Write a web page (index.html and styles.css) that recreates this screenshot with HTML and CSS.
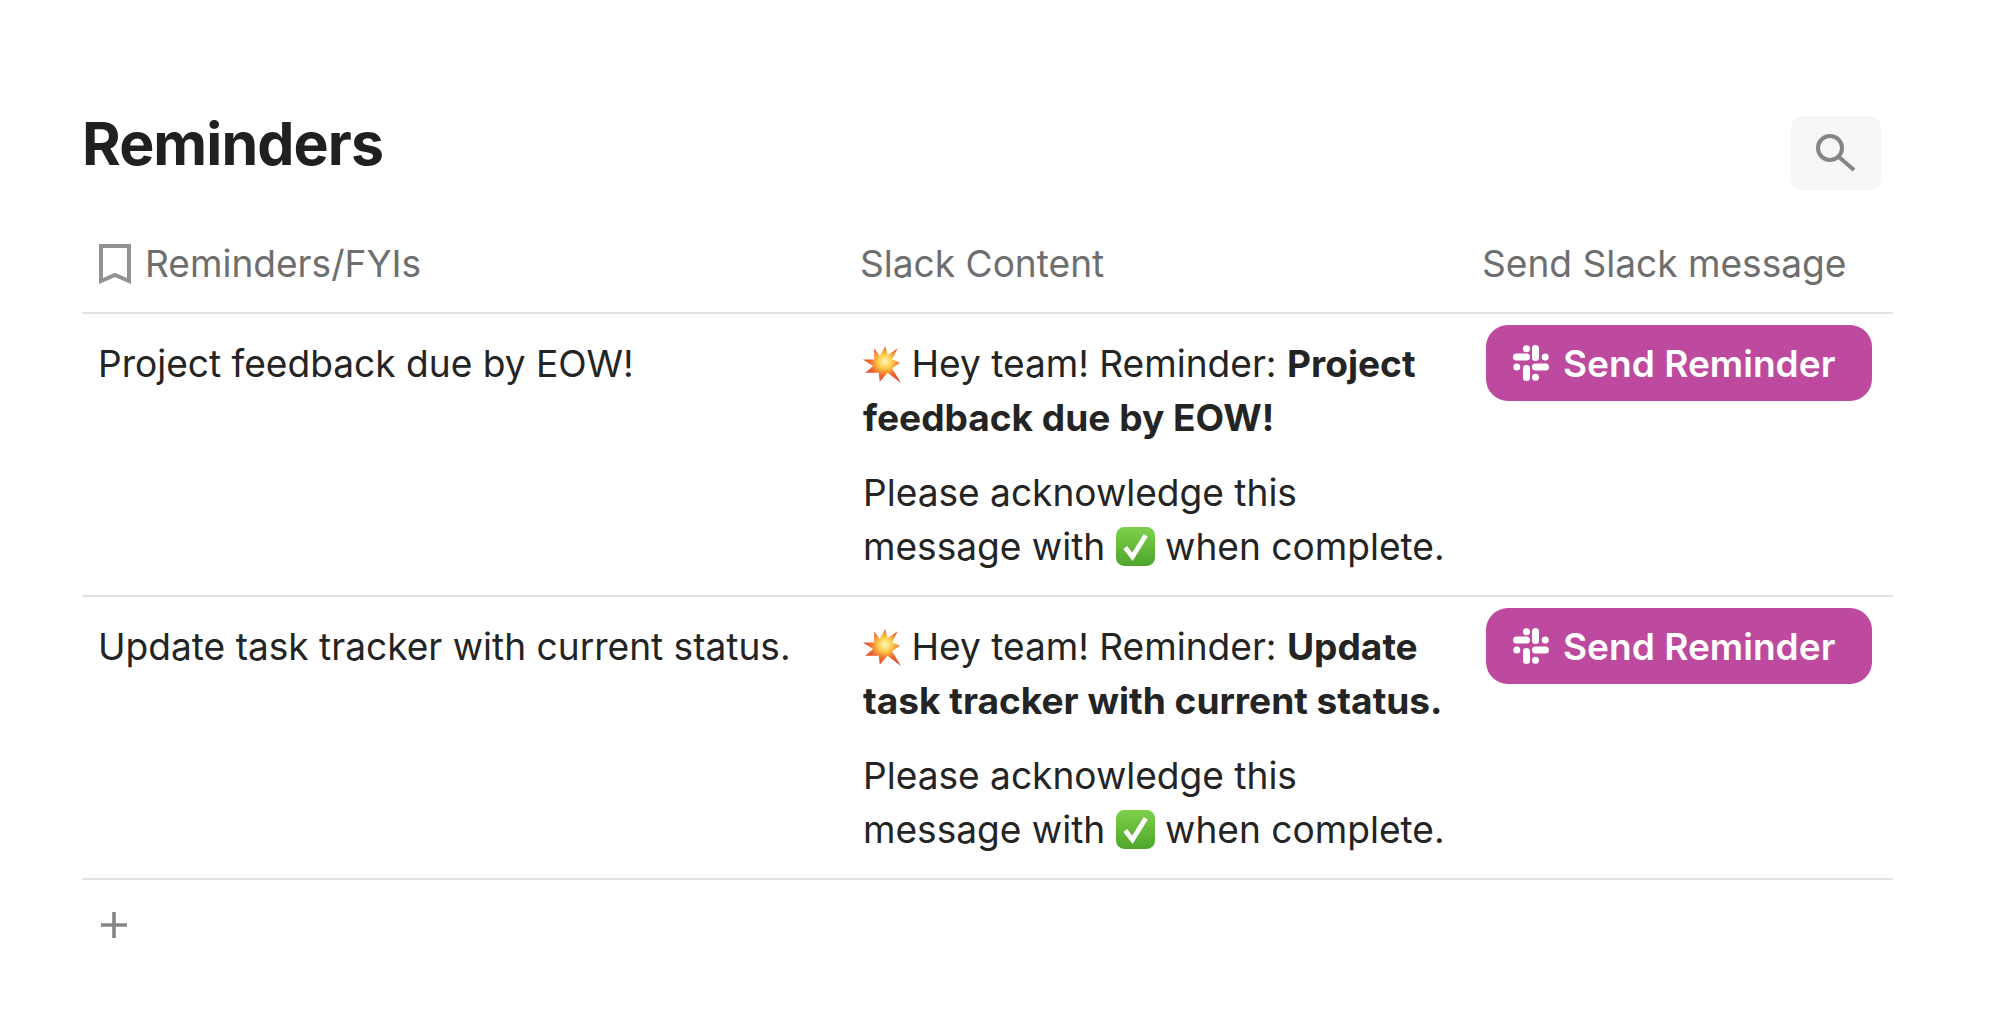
FILE: index.html
```html
<!DOCTYPE html>
<html lang="en">
<head>
  <meta charset="UTF-8" />
  <title>Reminders</title>
  <link rel="stylesheet" href="styles.css">
</head>
<body>
  <!-- shared icons -->
  <svg class="defs" width="0" height="0">
    <defs>
      <radialGradient id="burst-fill" cx="0.58" cy="0.42" r="0.6">
        <stop offset="0" stop-color="#fff8c0"/>
        <stop offset="0.3" stop-color="#ffcf4a"/>
        <stop offset="0.65" stop-color="#f2682e"/>
        <stop offset="1" stop-color="#d9442c"/>
      </radialGradient>
      <linearGradient id="check-fill" x1="0" y1="0" x2="0" y2="1">
        <stop offset="0" stop-color="#7ed04a"/>
        <stop offset="1" stop-color="#4fa62c"/>
      </linearGradient>
      <symbol id="burst" viewBox="0 0 34 34">
        <polygon fill="url(#burst-fill)" points="10,2 15,9 20,0 22,8 31,2 26,12 33,15 26,20 34,33 22,24 15,32 14,24 2,24 9,18 0,12 10,12"/>
      </symbol>
      <symbol id="check" viewBox="0 0 38 38">
        <rect width="38" height="38" rx="8" fill="url(#check-fill)"/>
        <path d="M9 20 L16 29 L29 8" fill="none" stroke="#fff" stroke-width="4.6"/>
      </symbol>
      <symbol id="slack" viewBox="0 0 36 36">
        <g fill="#fff">
          <rect x="19" y="0" width="7" height="16" rx="3.5"/>
          <rect x="10" y="20" width="7" height="16" rx="3.5"/>
          <rect x="0" y="8.500" width="17" height="7" rx="3.5"/>
          <rect x="19" y="18.500" width="17" height="7" rx="3.5"/>
          <circle cx="13.500" cy="3.800" r="3.500"/>
          <circle cx="32.200" cy="12" r="3.500"/>
          <circle cx="22.500" cy="32.200" r="3.500"/>
          <circle cx="3.800" cy="22" r="3.500"/>
        </g>
      </symbol>
    </defs>
  </svg>

  <div class="container">
    <div class="top">
      <h1>Reminders</h1>
      <button class="search-btn">
        <svg width="40" height="40" viewBox="0 0 40 40" fill="none" stroke="#858585" stroke-width="4">
          <circle cx="14" cy="15" r="12"/>
          <path d="M23 24 L38 37"/>
        </svg>
      </button>
    </div>

    <div class="row head">
      <div class="col-a head-a">
        <svg width="32" height="40" viewBox="0 0 32 40" fill="none" stroke="#929292" stroke-width="4">
          <path d="M2 2 H30 V37 L16 31 L2 37 Z"/>
        </svg>
        Reminders/FYIs
      </div>
      <div class="col-b">Slack Content</div>
      <div class="col-c">Send Slack message</div>
    </div>

    <div class="row item">
      <div class="col-a">Project feedback due by EOW!</div>
      <div class="col-b">
        <p><svg class="emoji-burst"><use href="#burst"/></svg> Hey team! Reminder: <b>Project feedback due by EOW!</b></p>
        <p>Please acknowledge this message with <svg class="emoji-check"><use href="#check"/></svg> when complete.</p>
      </div>
      <div class="col-c">
        <button class="send"><svg width="36" height="36"><use href="#slack"/></svg>Send Reminder</button>
      </div>
    </div>

    <div class="row item">
      <div class="col-a">Update task tracker with current status.</div>
      <div class="col-b">
        <p><svg class="emoji-burst"><use href="#burst"/></svg> Hey team! Reminder: <b>Update task tracker with current status.</b></p>
        <p>Please acknowledge this message with <svg class="emoji-check"><use href="#check"/></svg> when complete.</p>
      </div>
      <div class="col-c">
        <button class="send"><svg width="36" height="36"><use href="#slack"/></svg>Send Reminder</button>
      </div>
    </div>

    <div class="add">
      <svg width="28" height="28" viewBox="0 0 28 28" stroke="#858585" stroke-width="3.6">
        <path d="M14 1 V27 M1 14 H27"/>
      </svg>
    </div>
  </div>
</body>
</html>
```
FILE: styles.css
```css
body {
  background: white;
  font-family: Inter, "Noto Sans", sans-serif;
  margin: 0;
  padding: 0;
  color: #222;
}

.defs {
  display: block;
  height: 0;
}

.container {
  width: 1811px;
  margin-left: 82px;
  padding-top: 110px;
}

.top {
  display: flex;
  justify-content: space-between;
  height: 119px;
  padding-right: 12px;
}

h1 {
  margin: 0;
  font-size: 59px;
  line-height: 68px;
  font-weight: 700;
  letter-spacing: -0.9px;
  color: #202020;
}

.search-btn {
  width: 90px;
  height: 74px;
  margin-top: 6px;
  padding: 0;
  border: none;
  border-radius: 12px;
  background: #f6f6f6;
  display: flex;
  align-items: center;
  justify-content: center;
}

.row {
  display: grid;
  grid-template-columns: 778px 623px 1fr;
  font-size: 37.1px;
  line-height: 54px;
  border-bottom: 2px solid #e3e3e3;
}

.head {
  box-sizing: border-box;
  height: 85px;
  padding-bottom: 14px;
  align-items: center;
  color: #6e6e6e;
}

.head-a {
  display: flex;
  align-items: center;
  gap: 14px;
}

.col-a {
  padding-left: 16px;
}

.head .col-a {
  padding-left: 17px;
}

.head .col-c {
  margin-left: -1px;
}

.item {
  height: 270px;
  padding-top: 11px;
  color: #242424;
}

.item .col-a {
  padding-top: 12px;
}

.item .col-b {
  padding: 12px 0 0 3px;
}

.item p {
  margin: 0 0 21px;
  width: 595px;
}

.emoji-burst {
  width: 38px;
  height: 38px;
  vertical-align: -7px;
}

.emoji-check {
  width: 39px;
  height: 39px;
  vertical-align: -6px;
}

.send {
  display: flex;
  align-items: center;
  gap: 14px;
  width: 386px;
  height: 76px;
  margin-left: 3px;
  padding: 0 0 0 27px;
  border: none;
  border-radius: 22px;
  background: #bd4a9e;
  color: white;
  font-family: Inter, "Noto Sans", sans-serif;
  font-size: 37.1px;
  font-weight: 600;
}

.add {
  padding: 31px 0 0 18px;
}
```
